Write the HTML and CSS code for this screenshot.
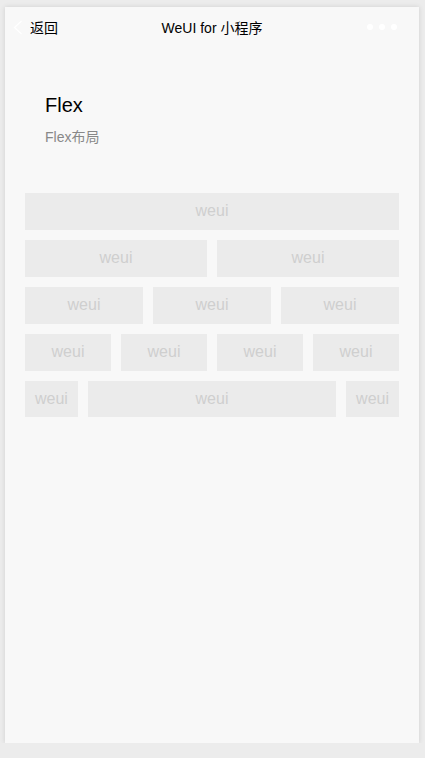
FILE: index.html
```html
<!DOCTYPE html>
<html lang="zh-CN">
<head>
<meta charset="utf-8">
<title>Flex</title>
<link rel="stylesheet" href="styles.css">
</head>
<body>
<div class="frame">
  <div class="navbar">
    <div class="nav-back">
      <svg class="nav-back__icon" width="10" height="16" viewBox="0 0 10 16"><polyline points="8.5,1 1.5,7.5 8.5,14" fill="none" stroke="#ffffff" stroke-width="1.2"/></svg>
      <span class="nav-back__text">返回</span>
    </div>
    <div class="nav-title">WeUI for 小程序</div>
    <div class="nav-menu"><span class="dot"></span><span class="dot"></span><span class="dot"></span></div>
  </div>
  <div class="page__hd">
    <div class="page__title">Flex</div>
    <div class="page__desc">Flex布局</div>
  </div>
  <div class="page__bd">
    <div class="weui-flex"><div class="weui-flex__item"><div class="placeholder">weui</div></div></div>
    <div class="weui-flex">
      <div class="weui-flex__item"><div class="placeholder">weui</div></div>
      <div class="weui-flex__item"><div class="placeholder">weui</div></div>
    </div>
    <div class="weui-flex">
      <div class="weui-flex__item"><div class="placeholder">weui</div></div>
      <div class="weui-flex__item"><div class="placeholder">weui</div></div>
      <div class="weui-flex__item"><div class="placeholder">weui</div></div>
    </div>
    <div class="weui-flex">
      <div class="weui-flex__item"><div class="placeholder">weui</div></div>
      <div class="weui-flex__item"><div class="placeholder">weui</div></div>
      <div class="weui-flex__item"><div class="placeholder">weui</div></div>
      <div class="weui-flex__item"><div class="placeholder">weui</div></div>
    </div>
    <div class="weui-flex">
      <div><div class="placeholder">weui</div></div>
      <div class="weui-flex__item"><div class="placeholder">weui</div></div>
      <div><div class="placeholder">weui</div></div>
    </div>
  </div>
</div>
</body>
</html>
```
FILE: styles.css
```css
html, body {
  margin: 0;
  padding: 0;
}
body {
  background: #ececec;
  font-family: "Liberation Sans", Arial, "Noto Sans CJK SC", sans-serif;
  line-height: 1.6;
  color: #000;
}
.frame {
  box-sizing: border-box;
  width: 414px;
  height: 736px;
  margin: 7px 0 0 5px;
  background: #f8f8f8;
  box-shadow: 0 0 5px rgba(0, 0, 0, 0.12);
}
.navbar {
  position: relative;
  height: 42px;
  display: flex;
  align-items: center;
  justify-content: center;
}
.nav-back {
  position: absolute;
  left: 8px;
  top: 0;
  height: 42px;
  display: flex;
  align-items: center;
}
.nav-back__icon {
  display: block;
  margin-right: 7px;
  margin-top: -1px;
}
.nav-back__text {
  font-size: 14px;
  line-height: 1;
}
.nav-title {
  font-size: 14px;
  line-height: 1;
}
.nav-menu {
  position: absolute;
  right: 22px;
  top: 17px;
  display: flex;
  gap: 6px;
}
.dot {
  display: block;
  width: 6px;
  height: 6px;
  border-radius: 50%;
  background: #fff;
}
.page__hd {
  padding: 40px;
}
.page__title {
  font-size: 20px;
  font-weight: 400;
}
.page__desc {
  margin-top: 5px;
  font-size: 14px;
  color: #888;
}
.page__bd {
  padding: 0 15px;
}
.weui-flex {
  display: flex;
}
.weui-flex__item {
  flex: 1;
}
.placeholder {
  margin: 5px;
  padding: 0 10px;
  background: #ebebeb;
  height: 2.3em;
  line-height: 2.3em;
  text-align: center;
  color: #cfcfcf;
  font-size: 16px;
}
```
